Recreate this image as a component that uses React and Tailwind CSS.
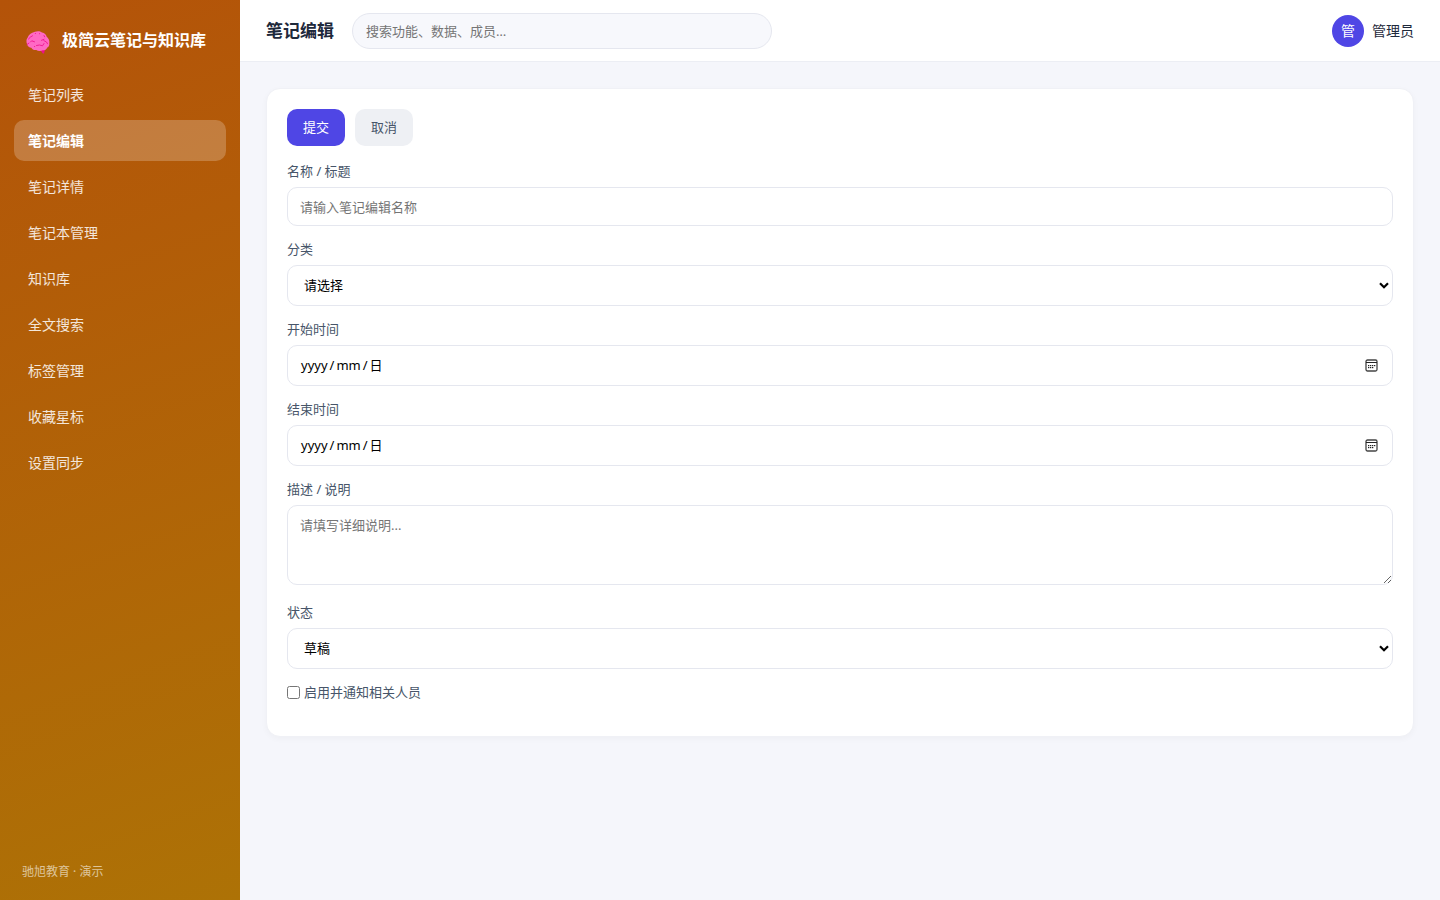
import { useState } from "react";

const NAV = [
  "笔记列表",
  "笔记编辑",
  "笔记详情",
  "笔记本管理",
  "知识库",
  "全文搜索",
  "标签管理",
  "收藏星标",
  "设置同步",
];

const FIELD =
  "block w-full rounded-[10px] border border-[#e5e7ef] bg-white text-[13px] text-black outline-none focus:border-[#4f46e5]";

function BrainIcon() {
  return (
    <svg viewBox="0 0 24 23" className="h-[23px] w-6 shrink-0" aria-hidden="true">
      <path d="M14 18.500h5l-1 4h-1.200z" fill="#ec1187" />
      <path
        d="M9 .800C11 0 14 0 16 1.400c2.500.5 4.200 2.200 4.700 4.400C22.500 7.500 23.700 9.500 23.300 12c.3 2.500-.7 4-2 4.500-.8 2-2.500 2.800-4.500 2.800-2 1-5 .9-6.500-.3-2 .4-4-.4-5-2.200-2-.1-3.500-1.300-4-3C0 11.500.2 8 1.600 6.800 2.500 4 5 1.600 9 .8z"
        fill="#ff69c4"
      />
      <g fill="none" stroke="#ee1590" strokeWidth="0.900" strokeLinecap="round" strokeLinejoin="round">
        <path d="M2.500 8 4.500 6 6.500 4.800" />
        <path d="M1 13.500 2.800 12.200" />
        <path d="M4.500 11 5.700 9.800 8.500 10.800" />
        <path d="M9.300 2.500h.2M13.500 2.700h.2M8.500 15.500h.2" />
        <path d="M18 4.500l.600 1.300" />
        <path d="M15.500 9.300 18 8.300" />
        <path d="M17.800 9.600 20.500 11l1 1.800" />
        <path d="M10.500 14.500 13.500 14l3 .800 1.500-2.300" />
      </g>
    </svg>
  );
}

function CalendarIcon() {
  return (
    <svg viewBox="0 0 13 13" className="h-[13px] w-[13px]" aria-hidden="true">
      <rect x="1" y="1" width="11" height="11" rx="1.500" fill="none" stroke="#444" strokeWidth="1.300" />
      <path d="M1 3.500h11" stroke="#222" strokeWidth="1" />
      <g fill="#222">
        <rect x="5" y="6" width="1.300" height="1.200" />
        <rect x="7" y="6" width="1.300" height="1.200" />
        <rect x="9" y="6" width="1.300" height="1.200" />
        <rect x="3" y="6" width="1.300" height="1.200" />
        <rect x="3" y="8" width="1.300" height="1.200" />
        <rect x="5" y="8" width="1.300" height="1.200" />
        <rect x="7" y="8" width="1.300" height="1.200" />
      </g>
    </svg>
  );
}

function Field({ id, label, children }) {
  return (
    <div>
      <label htmlFor={id} className="mb-1.5 block text-[13px] leading-[19px] text-[#475569]">
        {label}
      </label>
      {children}
    </div>
  );
}

function DateInput({ id }) {
  const [value, setValue] = useState("");
  return (
    <div className="relative">
      <input
        id={id}
        type="date"
        value={value}
        onChange={(e) => setValue(e.target.value)}
        className={
          value
            ? `${FIELD} h-[41px] px-3 [&::-webkit-calendar-picker-indicator]:opacity-0`
            : `${FIELD} h-[41px] px-3 [&::-webkit-calendar-picker-indicator]:opacity-0 [&::-webkit-datetime-edit]:opacity-0`
        }
      />
      <div className="pointer-events-none absolute inset-0 flex items-center justify-between pr-[15px] pl-3.5 text-[13px] text-black">
        <span className="flex gap-0.5">
          {!value && ["yyyy", "/", "mm", "/", "日"].map((part, i) => <span key={i}>{part}</span>)}
        </span>
        <CalendarIcon />
      </div>
    </div>
  );
}

function Select({ id, options }) {
  return (
    <div className="relative">
      <select id={id} className={`${FIELD} h-[41px] appearance-none px-4`}>
        {options.map((o) => (
          <option key={o}>{o}</option>
        ))}
      </select>
      <div className="pointer-events-none absolute inset-y-0 right-1 flex items-center">
        <svg viewBox="0 0 10 7" className="h-[7px] w-2.5" aria-hidden="true">
          <path d="M1 1.200 5 5.200 9 1.200" fill="none" stroke="#000" strokeWidth="2.200" />
        </svg>
      </div>
    </div>
  );
}

export default function App() {
  return (
    <div className="flex min-h-screen bg-[#f5f6fb] font-['Noto_Sans','Noto_Sans_CJK_SC',sans-serif] text-sm text-[#1e293b]">
      <aside className="flex w-60 shrink-0 flex-col bg-[linear-gradient(160deg,#b45309,#ad7206)] px-3.5 pt-6 pb-[18px]">
        <div className="flex items-center gap-3 pl-3 text-base leading-8 font-bold text-white">
          <span className="pt-1">
            <BrainIcon />
          </span>
          <span>极简云笔记与知识库</span>
        </div>
        <nav className="mt-[18px] flex flex-col gap-[5px]">
          {NAV.map((item, i) => (
            <a
              key={item}
              href="#"
              aria-current={i === 1 ? "page" : undefined}
              className={
                i === 1
                  ? "flex h-[41px] items-center rounded-[10px] bg-white/22 px-3.5 font-bold text-white"
                  : "flex h-[41px] items-center rounded-[10px] px-3.5 text-white/85"
              }
            >
              {item}
            </a>
          ))}
        </nav>
        <p className="mt-auto pl-2 text-xs leading-5 text-white/60">驰旭教育 · 演示</p>
      </aside>

      <div className="flex min-w-0 flex-1 flex-col">
        <header className="flex h-[62px] items-center border-b border-[#eceef4] bg-white px-[26px]">
          <h1 className="pt-0.5 text-[17px] font-bold">笔记编辑</h1>
          <input
            type="search"
            aria-label="搜索"
            placeholder="搜索功能、数据、成员…"
            className="ml-[18px] h-9 w-[420px] rounded-full border border-[#e5e7ef] bg-[#f7f8fc] px-[13px] text-[13px] outline-none placeholder:text-[#757575]"
          />
          <div className="ml-auto flex items-center gap-2">
            <span className="flex size-8 items-center justify-center rounded-full bg-[#4f46e5] text-white">管</span>
            <span>管理员</span>
          </div>
        </header>

        <main className="p-[26px]">
          <form
            onSubmit={(e) => e.preventDefault()}
            className="rounded-[14px] border border-[#f0f1f6] bg-white p-5 shadow-[0_2px_6px_rgba(15,23,42,0.03)]"
          >
            <div className="flex gap-2.5">
              <button type="submit" className="h-[37px] rounded-[10px] bg-[#4f46e5] px-4 text-[13px] text-white">
                提交
              </button>
              <button type="button" className="h-[37px] rounded-[10px] bg-[#eef0f4] px-4 text-[13px] text-[#475569]">
                取消
              </button>
            </div>

            <div className="mt-4 flex flex-col gap-3.5">
              <Field id="name" label="名称 / 标题">
                <input
                  id="name"
                  type="text"
                  placeholder="请输入笔记编辑名称"
                  className={`${FIELD} h-[39px] px-3 placeholder:text-[#757575]`}
                />
              </Field>
              <Field id="category" label="分类">
                <Select id="category" options={["请选择"]} />
              </Field>
              <Field id="start" label="开始时间">
                <DateInput id="start" />
              </Field>
              <Field id="end" label="结束时间">
                <DateInput id="end" />
              </Field>
              <Field id="desc" label="描述 / 说明">
                <textarea
                  id="desc"
                  placeholder="请填写详细说明..."
                  className={`${FIELD} mb-1 h-20 resize-y px-3 py-2.5 leading-[18px] placeholder:text-[#757575]`}
                />
              </Field>
              <Field id="status" label="状态">
                <Select id="status" options={["草稿", "已发布"]} />
              </Field>
              <label className="mb-3.5 flex items-center gap-1 text-[13px] leading-[19px] text-[#475569]">
                <input type="checkbox" className="size-[13px]" />
                启用并通知相关人员
              </label>
            </div>
          </form>
        </main>
      </div>
    </div>
  );
}
